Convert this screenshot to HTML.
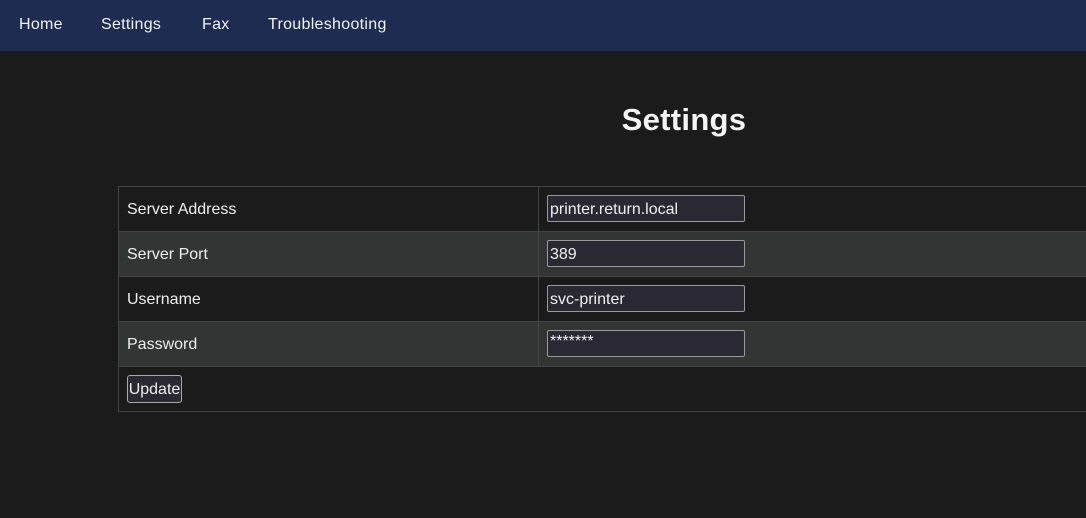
<!DOCTYPE html>
<html><head><style>
body{margin:0;background:#1b1b1b;width:1086px;height:518px;overflow:hidden;font-family:"Liberation Sans",sans-serif;color:#eee}
nav{height:51px;background:#1f2c52;position:relative}
nav a{position:absolute;top:16px;font-size:16px;color:#f2f2f2;text-decoration:none;letter-spacing:0.3px}
h1{position:absolute;left:0;width:1368px;top:102px;margin:0;text-align:center;font-size:31px;font-weight:bold;color:#f5f5f5;letter-spacing:0.3px}
.t{position:absolute;left:118px;top:186px;width:1000px;border:1px solid #444;border-right:none;font-family:"Liberation Sans Narrow","Liberation Sans",sans-serif;font-size:16px}
.r{height:44px;border-bottom:1px solid #444;position:relative;background:#1b1b1b}
.r.a{background:#333434}
.r:last-child{border-bottom:none}
.l{position:absolute;left:8px;top:14px}
.c{position:absolute;left:419px;top:0;bottom:0;border-left:1px solid #444}
.i{position:absolute;left:428px;top:8px;width:194px;height:25px;border:1px solid #999;border-radius:2px;background:#2a2933;color:#f0f0f0;line-height:27px;padding-left:2px}
.b{position:absolute;left:8px;top:8px;width:53px;height:26px;border:1px solid #aaa;border-radius:3px;background:#2a2933;line-height:27px;text-align:center}
</style></head><body>
<nav><a style="left:19px">Home</a><a style="left:101px">Settings</a><a style="left:202px">Fax</a><a style="left:268px">Troubleshooting</a></nav>
<h1>Settings</h1>
<div class="t">
<div class="r"><span class="l">Server Address</span><div class="c"></div><div class="i">printer.return.local</div></div>
<div class="r a"><span class="l">Server Port</span><div class="c"></div><div class="i">389</div></div>
<div class="r"><span class="l">Username</span><div class="c"></div><div class="i">svc-printer</div></div>
<div class="r a"><span class="l">Password</span><div class="c"></div><div class="i" style="line-height:22px">*******</div></div>
<div class="r"><div class="b">Update</div></div>
</div>
</body></html>
